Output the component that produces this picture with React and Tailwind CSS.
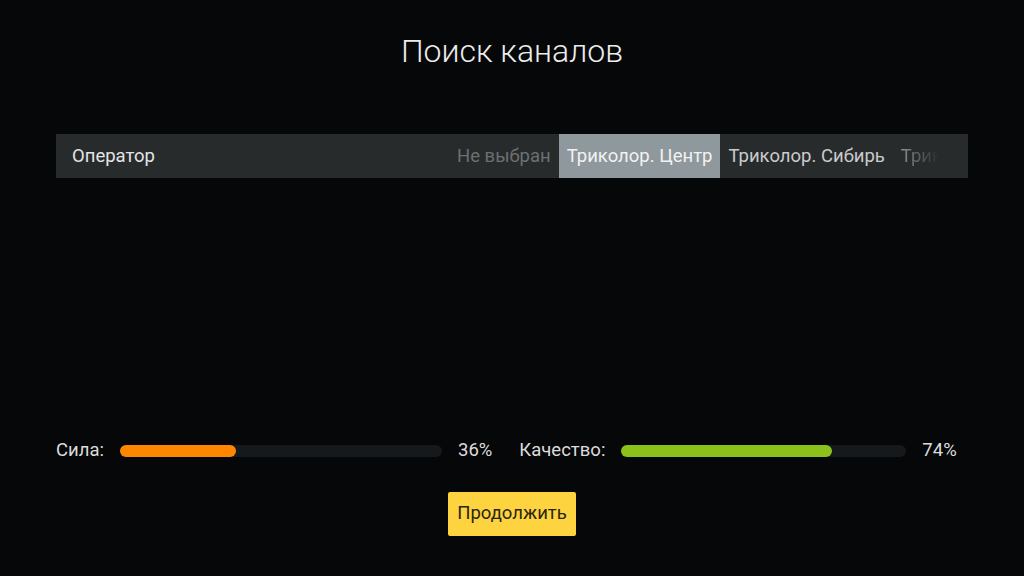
import React from "react";

const options = [
  { label: "Не выбран", state: "dim" },
  { label: "Триколор. Центр", state: "active" },
  { label: "Триколор. Сибирь", state: "normal" },
  { label: "Триколор. Дальний Восток", state: "fade" },
];

function Meter({ label, labelWidth, trackWidth, value, fill }) {
  return (
    <div className="flex items-center">
      <span className={`${labelWidth} text-[18.5px] text-[#dcdcdc]`}>{label}</span>
      <div className={`${trackWidth} h-[12px] rounded-full bg-[#15191b]`}>
        <div className={`h-full rounded-full ${fill}`} style={{ width: `${value}%` }} />
      </div>
      <span className="ml-4 text-[18.5px] text-[#dcdcdc]">{value}%</span>
    </div>
  );
}

export default function App() {
  return (
    <div
      className="flex h-[576px] w-[1024px] flex-col overflow-hidden bg-[#050709]"
      style={{ fontFamily: "Roboto, 'Noto Sans', sans-serif" }}
    >
      {/* Заголовок */}
      <h1 className="pt-[32px] text-center text-[32px] font-light leading-[38px] text-[#ececec]">
        Поиск каналов
      </h1>

      {/* Оператор */}
      <div className="mx-[56px] mt-[64px] flex h-[44px] items-center bg-[#282b2c]">
        <span className="pl-4 pt-[2px] text-[18.5px] text-[#e4e4e4]">Оператор</span>
        <div className="flex-1" />
        <div className="mr-[16px] flex h-full w-[503px] overflow-hidden whitespace-nowrap">
          {options.map((o) => (
            <div
              key={o.label}
              className={`flex h-full shrink-0 items-center px-2 pt-[2px] text-[18.5px] ${
                o.state === "active"
                  ? "bg-[#8f989c] text-[#f2f2f2]"
                  : o.state === "dim"
                  ? "text-[#6c7072]"
                  : o.state === "fade"
                  ? "bg-gradient-to-r from-[#a2a6a8] from-[0px] to-transparent to-[46px] bg-clip-text text-transparent"
                  : "text-[#c9cbcc]"
              }`}
            >
              {o.label}
            </div>
          ))}
        </div>
      </div>

      {/* Сила / Качество */}
      <div className="ml-[56px] mt-[263px] flex h-[20px] items-center">
        <Meter label="Сила:" labelWidth="w-[64px]" trackWidth="w-[322px]" value={36} fill="bg-[#ff8700]" />
        <div className="w-[27px]" />
        <Meter label="Качество:" labelWidth="w-[102px]" trackWidth="w-[285px]" value={74} fill="bg-[#8cc11b]" />
      </div>

      {/* Кнопка */}
      <div className="mt-[31px] flex justify-center">
        <button
          type="button"
          className="h-[44px] w-[128px] rounded-[2px] bg-[#fdd43f] text-[18.5px] text-[#2b2510]"
        >
          Продолжить
        </button>
      </div>
    </div>
  );
}
